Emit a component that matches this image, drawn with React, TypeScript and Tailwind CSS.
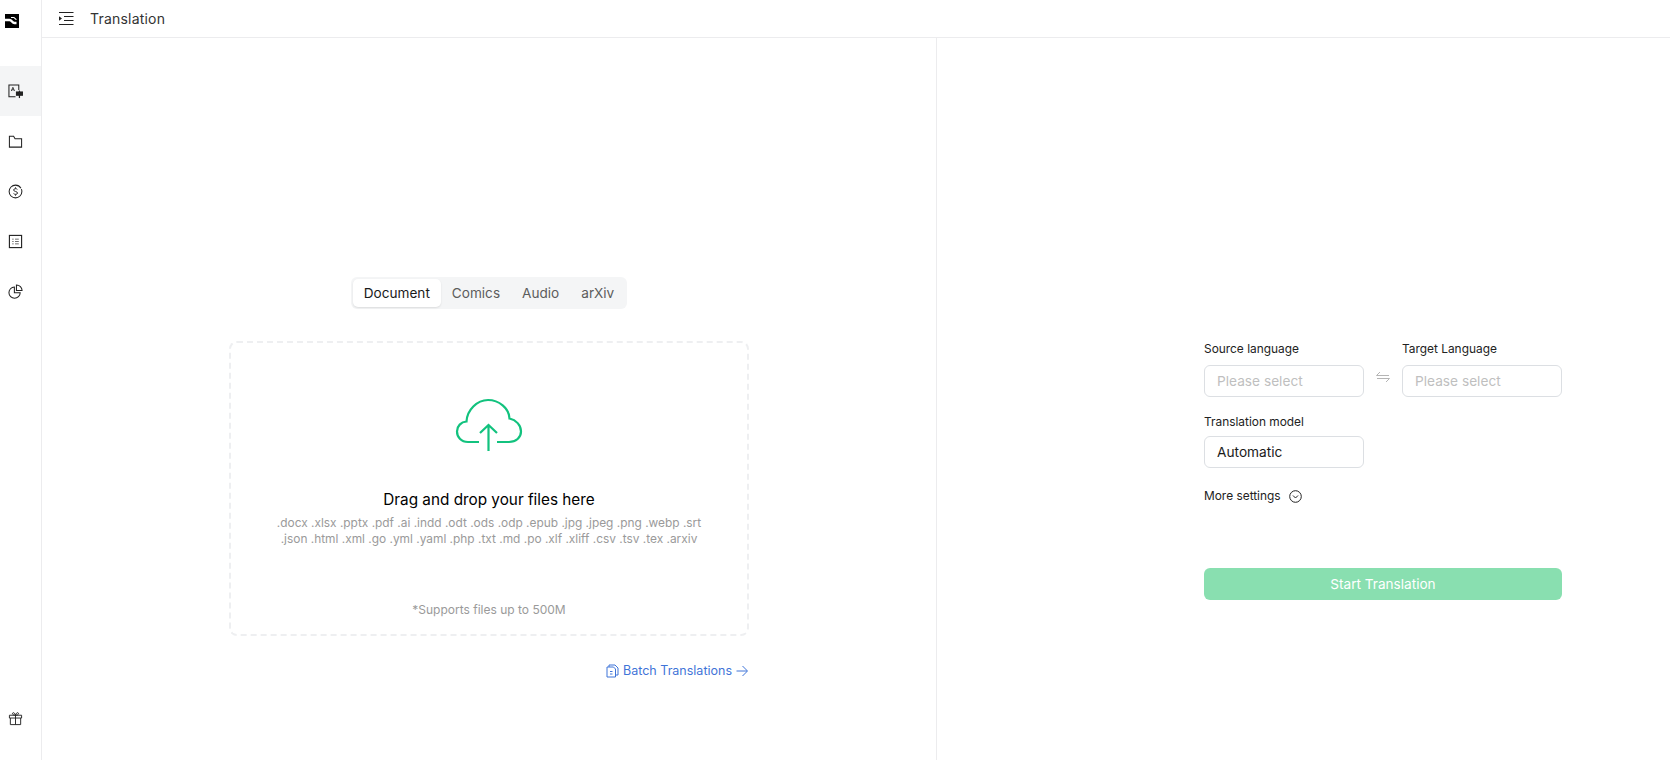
import React from "react";

const ic = "w-[15px] h-[15px] text-[#222]";

function Logo() {
  return (
    <svg width="14" height="14" viewBox="0 0 14 14">
      <rect width="14" height="14" fill="#000" />
      <path d="M0 6H4.500C7 6 7 9 9.500 9H11.500" fill="none" stroke="#fff" strokeWidth="2.400" />
      <path d="M6 3.500H8.500C10 3.500 10.200 5.500 11.500 5.500" fill="none" stroke="#fff" strokeWidth="1.100" />
    </svg>
  );
}

function NavIcon({ children }: { children: React.ReactNode }) {
  return (
    <svg viewBox="0 0 16 16" fill="none" stroke="currentColor" strokeWidth="1.100" className={ic}>
      {children}
    </svg>
  );
}

const navItems = [
  <NavIcon key="a">
    <path d="M11.500 6.500V1H1V13.500H8" />
    <path d="M3.500 7.500L5.200 3.500L7 7.500M4.100 6.200H6.300" strokeWidth="0.900" />
    <rect x="9" y="8.500" width="6.500" height="3.500" fill="currentColor" />
    <path d="M12.200 7V15" strokeWidth="1.300" />
  </NavIcon>,
  <NavIcon key="b">
    <path d="M1.500 14V2.500H6L7.500 5H14.500V14Z" />
  </NavIcon>,
  <NavIcon key="c">
    <circle cx="8" cy="8" r="6.800" strokeDasharray="38 1" />
    <path d="M10 5.800C9.500 4.700 6 4.500 6 6.400C6 8.500 10.200 7.500 10.200 9.700C10.200 11.500 6.500 11.300 5.900 10.100M8 3.500V4.800M8 11.200V12.500" strokeWidth="1" />
  </NavIcon>,
  <NavIcon key="d">
    <rect x="1.500" y="1.500" width="13" height="13" strokeWidth="1.200" />
    <path d="M7.500 5.500H11.500M7.500 8H11.500M7.500 10.500H11.500M4.500 5.500H6M4.500 8H6M4.500 10.500H6" strokeWidth="0.700" />
  </NavIcon>,
  <NavIcon key="e">
    <path d="M6.800 3.200A6 6 0 1 0 13 9.300H6.800Z" />
    <path d="M9 1V7H15A6 6 0 0 0 9 1Z" />
  </NavIcon>,
];

function Select({ text, placeholder }: { text: string; placeholder?: boolean }) {
  return (
    <div
      className={`w-[160px] h-[32px] flex items-center pl-[12px] border border-[#dcdfe3] rounded-[6px] text-[13.7px] ${
        placeholder ? "text-[#bfbfbf]" : "text-[#1a1a1a]"
      }`}
    >
      {text}
    </div>
  );
}

export default function App() {
  return (
    <div className="w-[1670px] h-[760px] flex bg-white overflow-hidden font-['Inter',sans-serif]">
      <aside className="w-[42px] shrink-0 border-r border-[#ececee] flex flex-col">
        <div className="h-[66px] pt-[14px] pl-[5px]">
          <Logo />
        </div>
        {navItems.map((n, i) => (
          <div
            key={i}
            className={`h-[50px] flex items-center justify-center pr-[10px] ${i === 0 ? "bg-[#f4f5f6]" : ""}`}
          >
            {n}
          </div>
        ))}
        <div className="mt-auto h-[49px] flex justify-center pr-[10px]">
          <svg viewBox="0 0 16 16" fill="none" stroke="currentColor" strokeWidth="1" className={ic}>
            <path d="M1.500 4.500H14.500V7.500H1.500ZM2.500 7.500V14.500H13.500V7.500M8 4.500V14.500" />
            <path d="M8 4.500C6 4.500 4.500 3.800 4.800 2.500C5.200 1 7.500 2 8 4.500C8.500 2 10.800 1 11.200 2.500C11.500 3.800 10 4.500 8 4.500Z" />
          </svg>
        </div>
      </aside>

      <div className="flex-1 flex flex-col min-w-0">
        <header className="h-[38px] shrink-0 border-b border-[#ececee] flex items-center pl-[16px]">
          <svg width="16" height="15" viewBox="0 0 16 15" fill="none" stroke="#222" strokeWidth="1.200">
            <path d="M1 1.500H15.500M6 5.500H15.500M6 9.500H15.500M1 13.500H15.500" />
            <path d="M1 5.200L4 7.500L1 9.800Z" fill="#222" stroke="none" />
          </svg>
          <span className="ml-[16px] text-[14px] text-[#333] tracking-[0.2px]">Translation</span>
        </header>

        <main className="flex-1 flex min-h-0">
          <section className="w-[895px] shrink-0 border-r border-[#ececee] flex flex-col items-center pt-[239px]">
            <div className="h-[32px] bg-[#f4f5f6] rounded-[6px] p-[2px] flex items-center text-[13.6px] text-[#5c5c5c]">
              <div className="h-[28px] px-[11px] flex items-center bg-white rounded-[5px] shadow-[0_1px_2px_rgba(0,0,0,0.1)] text-[#1a1a1a]">
                Document
              </div>
              <div className="px-[11px]">Comics</div>
              <div className="px-[11px]">Audio</div>
              <div className="pl-[11px] pr-[11px]">arXiv</div>
            </div>

            <div className="mt-[32px] w-[520px] h-[295px] border-2 border-dashed border-[#eeeff1] rounded-[8px] flex flex-col items-center pt-[55px]">
              <svg width="68" height="54" viewBox="0 0 68 54" fill="none" stroke="#12c27e" strokeWidth="2.200">
                <path d="M24 44H13C6 44 2 39 2 33.500C2 28 6 24 11.500 23.500C12 12 22 2 33 2C44 2 54 10 54.500 20.500C61 22 66 27 66 33.500C66 39.500 61 44 54 44H42" />
                <path d="M33.500 53V27M25 35L33.500 27L42 35" />
              </svg>
              <div className="mt-[36px] text-[15.3px] leading-[24px] text-black">Drag and drop your files here</div>
              <div className="mt-[3px] w-[440px] text-center text-[11.9px] leading-[16px] text-[#9a9a9a]">
                .docx .xlsx .pptx .pdf .ai .indd .odt .ods .odp .epub .jpg .jpeg .png .webp .srt .json .html .xml .go
                .yml .yaml .php .txt .md .po .xlf .xliff .csv .tsv .tex .arxiv
              </div>
              <div className="mt-auto mb-[16px] text-[12px] leading-[16px] text-[#9a9a9a]">*Supports files up to 500M</div>
            </div>

            <div className="mt-[26px] w-[520px] pr-[1px] flex justify-end items-center text-[12.5px] text-[#3f74d8]">
              <svg width="13" height="14" viewBox="0 0 13 14" fill="none" stroke="currentColor" strokeWidth="1">
                <path d="M1 3H7.500L9.500 5V13H1Z" />
                <path d="M3 3V1H9L12 4V11H9.500" />
                <path d="M4 7.500H6.500M4 10H6.500" />
              </svg>
              <span className="ml-[4px]">Batch Translations</span>
              <svg className="ml-[4px]" width="12" height="12" viewBox="0 0 12 12" fill="none" stroke="currentColor" strokeWidth="1">
                <path d="M0.500 6H11M6.500 1L11.500 6L6.500 11" />
              </svg>
            </div>
          </section>

          <section className="flex-1 flex flex-col pl-[267px] pt-[303px]">
            <div className="flex w-[358px] items-start justify-between">
              <div>
                <div className="text-[11.9px] leading-[16px] text-[#222]">Source language</div>
                <div className="mt-[8px]">
                  <Select text="Please select" placeholder />
                </div>
              </div>
              <svg className="mt-[30px]" width="14" height="12" viewBox="0 0 14 12" fill="none" stroke="#b5b5b5" strokeWidth="1">
                <path d="M0.500 4.500H13M0.500 4.500L4 1M13.500 7.500H1M13.500 7.500L10 11" />
              </svg>
              <div>
                <div className="text-[11.9px] leading-[16px] text-[#222]">Target Language</div>
                <div className="mt-[8px]">
                  <Select text="Please select" placeholder />
                </div>
              </div>
            </div>
            <div className="mt-[17px] text-[11.9px] leading-[16px] text-[#222]">Translation model</div>
            <div className="mt-[6px]">
              <Select text="Automatic" />
            </div>
            <div className="mt-[20px] flex items-center text-[11.9px] leading-[16px] text-[#222]">
              More settings
              <svg className="ml-[8px]" width="13" height="13" viewBox="0 0 13 13" fill="none" stroke="#222" strokeWidth="1">
                <circle cx="6.500" cy="6.500" r="5.800" />
                <path d="M4 5.500L6.500 8L9 5.500" />
              </svg>
            </div>
            <div className="mt-[64px] w-[358px] h-[32px] rounded-[6px] bg-[#89dfb0] text-white text-[13.6px] flex items-center justify-center">
              Start Translation
            </div>
          </section>
        </main>
      </div>
    </div>
  );
}
